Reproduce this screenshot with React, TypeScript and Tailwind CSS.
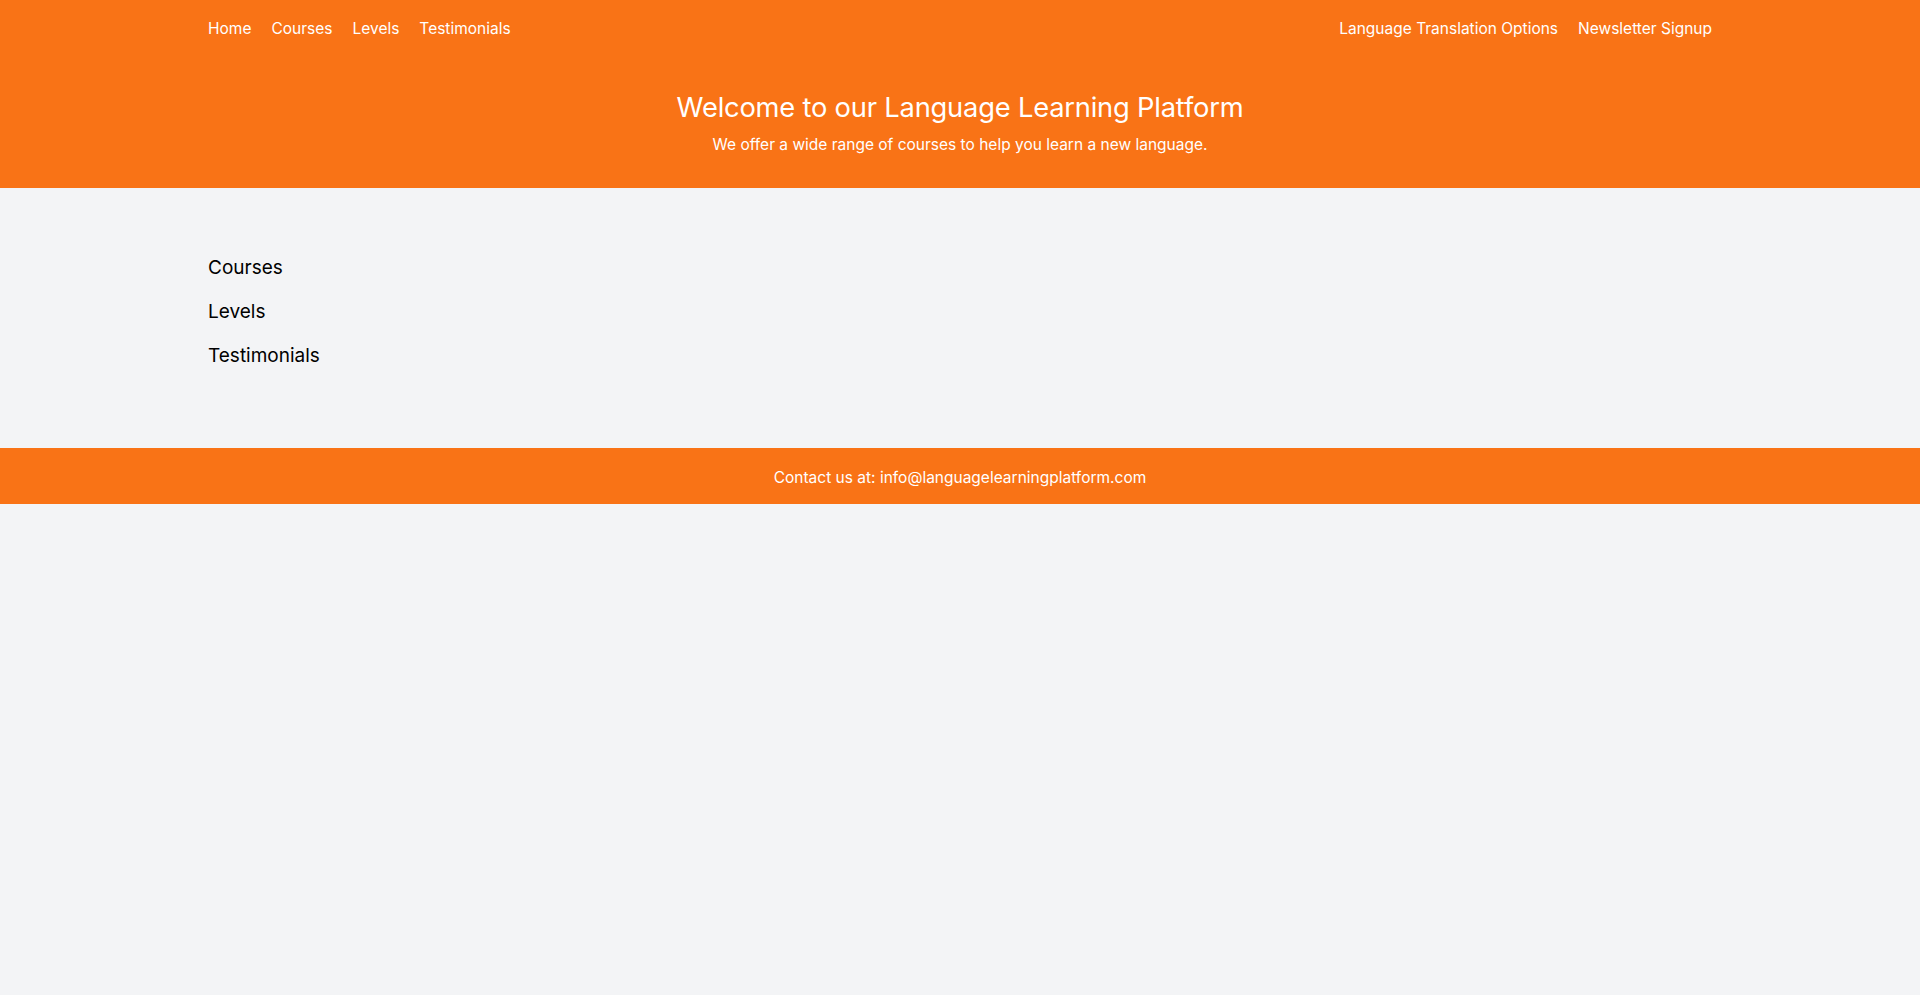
export default function App() {
  return (
    <div className="min-h-screen bg-[#f3f4f6]" style={{ fontFamily: 'Inter, "Noto Sans", sans-serif' }}>
      <header className="bg-[#f97316] text-white">
        <nav className="mx-auto max-w-[1536px] px-4 pt-[17px] pb-[15px] flex justify-between text-[15.5px] leading-6">
          <ul className="flex gap-5">
            <li><a href="#">Home</a></li>
            <li><a href="#">Courses</a></li>
            <li><a href="#">Levels</a></li>
            <li><a href="#">Testimonials</a></li>
          </ul>
          <ul className="flex gap-5">
            <li><a href="#">Language Translation Options</a></li>
            <li><a href="#">Newsletter Signup</a></li>
          </ul>
        </nav>
        <div className="mx-auto max-w-[1536px] px-4 pt-[34px] pb-[31px] text-center">
          <h1 className="text-[27.3px] leading-9 tracking-[-0.2px]">Welcome to our Language Learning Platform</h1>
          <p className="mt-[7px] text-[15.5px] leading-6">We offer a wide range of courses to help you learn a new language.</p>
        </div>
      </header>
      <main className="mx-auto max-w-[1536px] px-4 py-16 text-black">
        <ul>
          <li className="text-[19px] leading-7 pt-[2px]">Courses</li>
          <li className="text-[19px] leading-7 mt-4">Levels</li>
          <li className="text-[19px] leading-7 mt-4 mb-[14px]">Testimonials</li>
        </ul>
      </main>
      <footer className="bg-[#f97316] text-white pt-[18px] pb-[14px] text-center text-[15.5px] leading-6">
        Contact us at: info@languagelearningplatform.com
      </footer>
    </div>
  );
}
